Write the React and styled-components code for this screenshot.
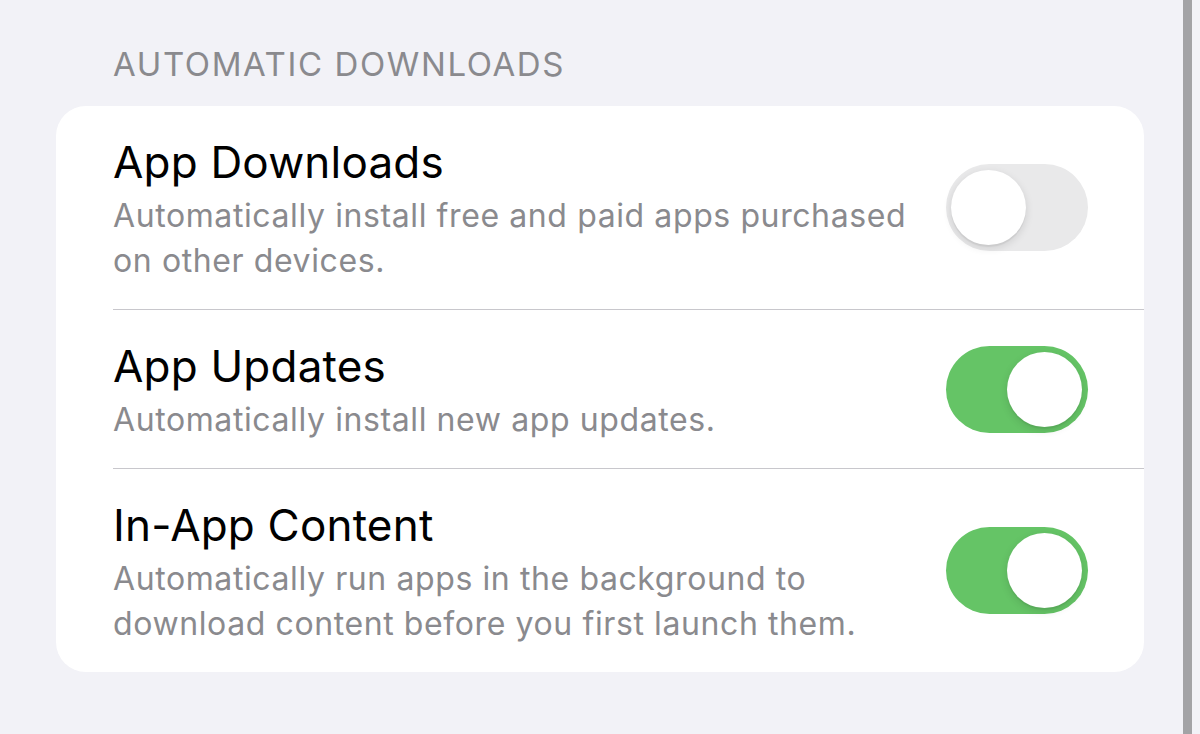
import React, { useState } from "react";
import styled, { createGlobalStyle } from "styled-components";

const GlobalStyle = createGlobalStyle`
    html, body {
        margin: 0;
        padding: 0;
        background: #f2f2f7;
    }
    body {
        font-family: "Inter", "Noto Sans", sans-serif;
        -webkit-font-smoothing: antialiased;
    }
`;

const Page = styled.div`
    display: flex;
    height: 734px;
    overflow: hidden;
    background: #f2f2f7;
`;

const Content = styled.div`
    flex: 1;
    padding: 44px 39px 0 56px;
`;

const ScrollTrack = styled.div`
    width: 9px;
    margin-right: 8px;
    background: #a3a3a6;
`;

const SectionHeader = styled.h2`
    margin: 0 0 22px 57px;
    font-size: 33px;
    font-weight: 400;
    line-height: 40px;
    color: #8a8a8e;
    letter-spacing: 1.6px;
`;

const Card = styled.div`
    background: #ffffff;
    border-radius: 30px;
    overflow: hidden;
`;

const Row = styled.div`
    display: flex;
    align-items: center;
    padding-left: 57px;
`;

const RowInner = styled.div`
    flex: 1;
    display: flex;
    align-items: center;
    padding: 26px 56px 26px 0;
    border-bottom: ${(p) => (p.$last ? "none" : "1px solid #c8c7cc")};
`;

const TextBlock = styled.div`
    flex: 1;
    padding-right: 40px;
`;

const Title = styled.div`
    font-size: 44px;
    line-height: 61px;
    color: #000000;
    letter-spacing: 0.2px;
`;

const Subtitle = styled.div`
    font-size: 32px;
    line-height: 45px;
    color: #8a8a8e;
    letter-spacing: 0.6px;
    white-space: nowrap;
`;

const Switch = styled.button`
    position: relative;
    flex: none;
    width: 142px;
    height: 87px;
    border: none;
    border-radius: 44px;
    padding: 0;
    cursor: pointer;
    background: ${(p) => (p.$on ? "#65c466" : "#e9e9ea")};
`;

const Knob = styled.span`
    position: absolute;
    top: 6px;
    left: ${(p) => (p.$on ? "61px" : "5px")};
    width: 75px;
    height: 75px;
    border-radius: 50%;
    background: #ffffff;
    box-shadow: 0 3px 8px rgba(0, 0, 0, 0.12), 0 2px 1px rgba(0, 0, 0, 0.05);
`;

const Toggle = ({ initial }) => {
    const [on, setOn] = useState(initial);
    return (
        <Switch $on={on} onClick={() => setOn(!on)}>
            <Knob $on={on} />
        </Switch>
    );
};

const rows = [
    {
        title: "App Downloads",
        lines: [
            "Automatically install free and paid apps purchased",
            "on other devices."
        ],
        on: false
    },
    {
        title: "App Updates",
        lines: ["Automatically install new app updates."],
        on: true
    },
    {
        title: "In-App Content",
        lines: [
            "Automatically run apps in the background to",
            "download content before you first launch them."
        ],
        on: true
    }
];

const App = () => {
    return (
        <Page>
            <GlobalStyle />
            <Content>
                <SectionHeader>AUTOMATIC DOWNLOADS</SectionHeader>
                <Card>
                    {rows.map((row, i) => (
                        <Row key={row.title}>
                            <RowInner $last={i === rows.length - 1}>
                                <TextBlock>
                                    <Title>{row.title}</Title>
                                    {row.lines.map((l) => (
                                        <Subtitle key={l}>{l}</Subtitle>
                                    ))}
                                </TextBlock>
                                <Toggle initial={row.on} />
                            </RowInner>
                        </Row>
                    ))}
                </Card>
            </Content>
            <ScrollTrack />
        </Page>
    );
};

export default App;
